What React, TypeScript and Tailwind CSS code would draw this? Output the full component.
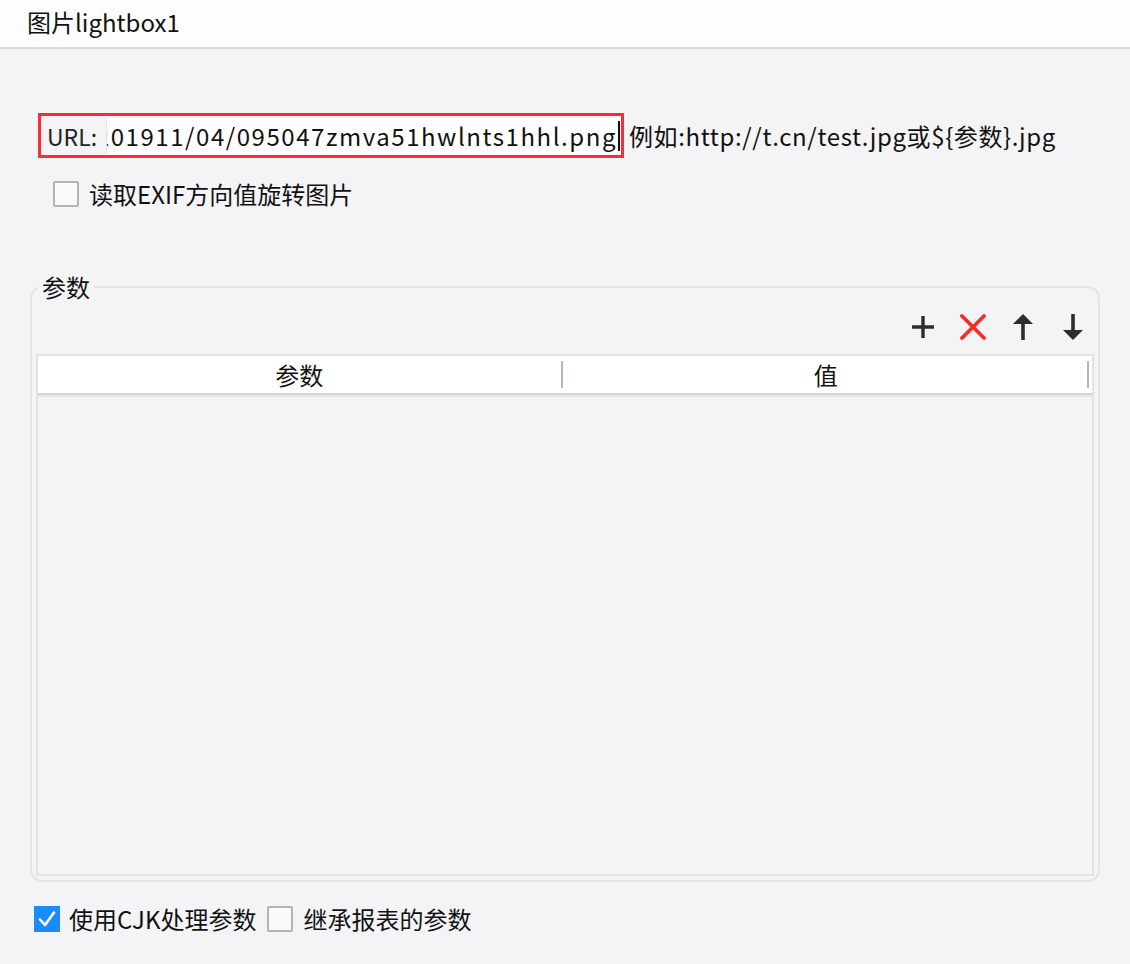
const font = { fontFamily: '"Noto Sans CJK SC", "Noto Sans", sans-serif' };

function Checkbox({ checked }: { checked?: boolean }) {
  if (checked) {
    return (
      <span className="flex h-[26px] w-[26px] shrink-0 items-center justify-center bg-[#1b8cfb]">
        <svg width="20" height="20" viewBox="0 0 20 20">
          <path d="M3 10.5 L8 16 L17 3.5" fill="none" stroke="#fff" strokeWidth="2.6" strokeLinecap="round" strokeLinejoin="round" />
        </svg>
      </span>
    );
  }
  return <span className="block h-[26px] w-[26px] shrink-0 rounded-[2px] border-2 border-[#b4b4b4] bg-[#fafafa]" />;
}

function ToolIcons() {
  return (
    <div className="flex h-[55px] items-center justify-end gap-[24px] pr-[8px]">
      <svg width="26" height="26" viewBox="0 0 26 26">
        <path d="M13 2v22M2 13h22" stroke="#2d2d2d" strokeWidth="3.4" />
      </svg>
      <svg width="26" height="26" viewBox="0 0 26 26">
        <path d="M2 2L24 24M24 2L2 24" stroke="#ff2b2b" strokeWidth="3.8" strokeLinecap="round" />
      </svg>
      <svg width="26" height="28" viewBox="0 0 26 28">
        <path d="M13 27V8" stroke="#2d2d2d" strokeWidth="3.6" />
        <path d="M3 11L13 1L23 11Z" fill="#2d2d2d" />
      </svg>
      <svg width="26" height="28" viewBox="0 0 26 28">
        <path d="M13 1v19" stroke="#2d2d2d" strokeWidth="3.6" />
        <path d="M3 17L13 27L23 17Z" fill="#2d2d2d" />
      </svg>
    </div>
  );
}

export default function App() {
  return (
    <div className="h-[964px] w-[1130px] overflow-hidden bg-[#f4f4f6] text-[24px] text-[#111]" style={font}>
      <div className="flex h-[49px] items-center border-b-2 border-[#dcdcde] bg-[#fdfdfd] pb-[4px] pl-[27px] leading-[30px]">
        图片lightbox1
      </div>

      <div className="mt-[64px] flex items-center pl-[38px] leading-[30px]">
        <div className="flex h-[45px] w-[586px] items-center border-[3px] border-[#fb2c36]">
          <span className="w-[65px] shrink-0 whitespace-nowrap pl-[6px] text-[23px] text-[#222]">URL:</span>
          <div className="flex h-[36px] min-w-0 flex-1 justify-end overflow-hidden border-l border-[#e2e2e2] bg-white">
            <span className="whitespace-nowrap leading-[36px] tracking-[1.55px]">
              201911/04/095047zmva51hwlnts1hhl.png
            </span>
            <span className="mx-[1px] mt-[3px] h-[30px] w-[2px] shrink-0 bg-[#111]" />
          </div>
        </div>
        <span className="pl-[5px] tracking-[0.6px]">例如:http://t.cn/test.jpg或${'{'}参数{'}'}.jpg</span>
      </div>

      <div className="mt-[21px] flex items-center gap-[10px] pl-[53px] leading-[30px]">
        <Checkbox />
        <span>读取EXIF方向值旋转图片</span>
      </div>

      <fieldset className="mx-[30px] mt-[66px] h-[607px] rounded-[12px] border-2 border-[#e4e4e6] px-[4px] pb-[4px]">
        <legend className="ml-[2px] px-[4px] leading-[24px]">参数</legend>
        <ToolIcons />
        <div className="flex h-[522px] flex-col border-2 border-[#e3e3e5]">
          <div className="flex h-[37px] bg-white">
            <div className="my-[5px] mr-[2px] flex flex-1 items-center justify-center border-r-2 border-[#bab6a9]">参数</div>
            <div className="my-[5px] mr-[3px] flex flex-1 items-center justify-center border-r-2 border-[#bab6a9]">值</div>
          </div>
          <div className="h-[2px] bg-[#d5d5d5]" />
          <div className="h-[2px] bg-[#e6e6e6]" />
          <div className="flex-1" />
        </div>
      </fieldset>

      <div className="mt-[22px] flex items-center pl-[34px] leading-[30px]">
        <Checkbox checked />
        <span className="ml-[9px]">使用CJK处理参数</span>
        <span className="ml-[11px]"><Checkbox /></span>
        <span className="ml-[10px]">继承报表的参数</span>
      </div>
    </div>
  );
}
